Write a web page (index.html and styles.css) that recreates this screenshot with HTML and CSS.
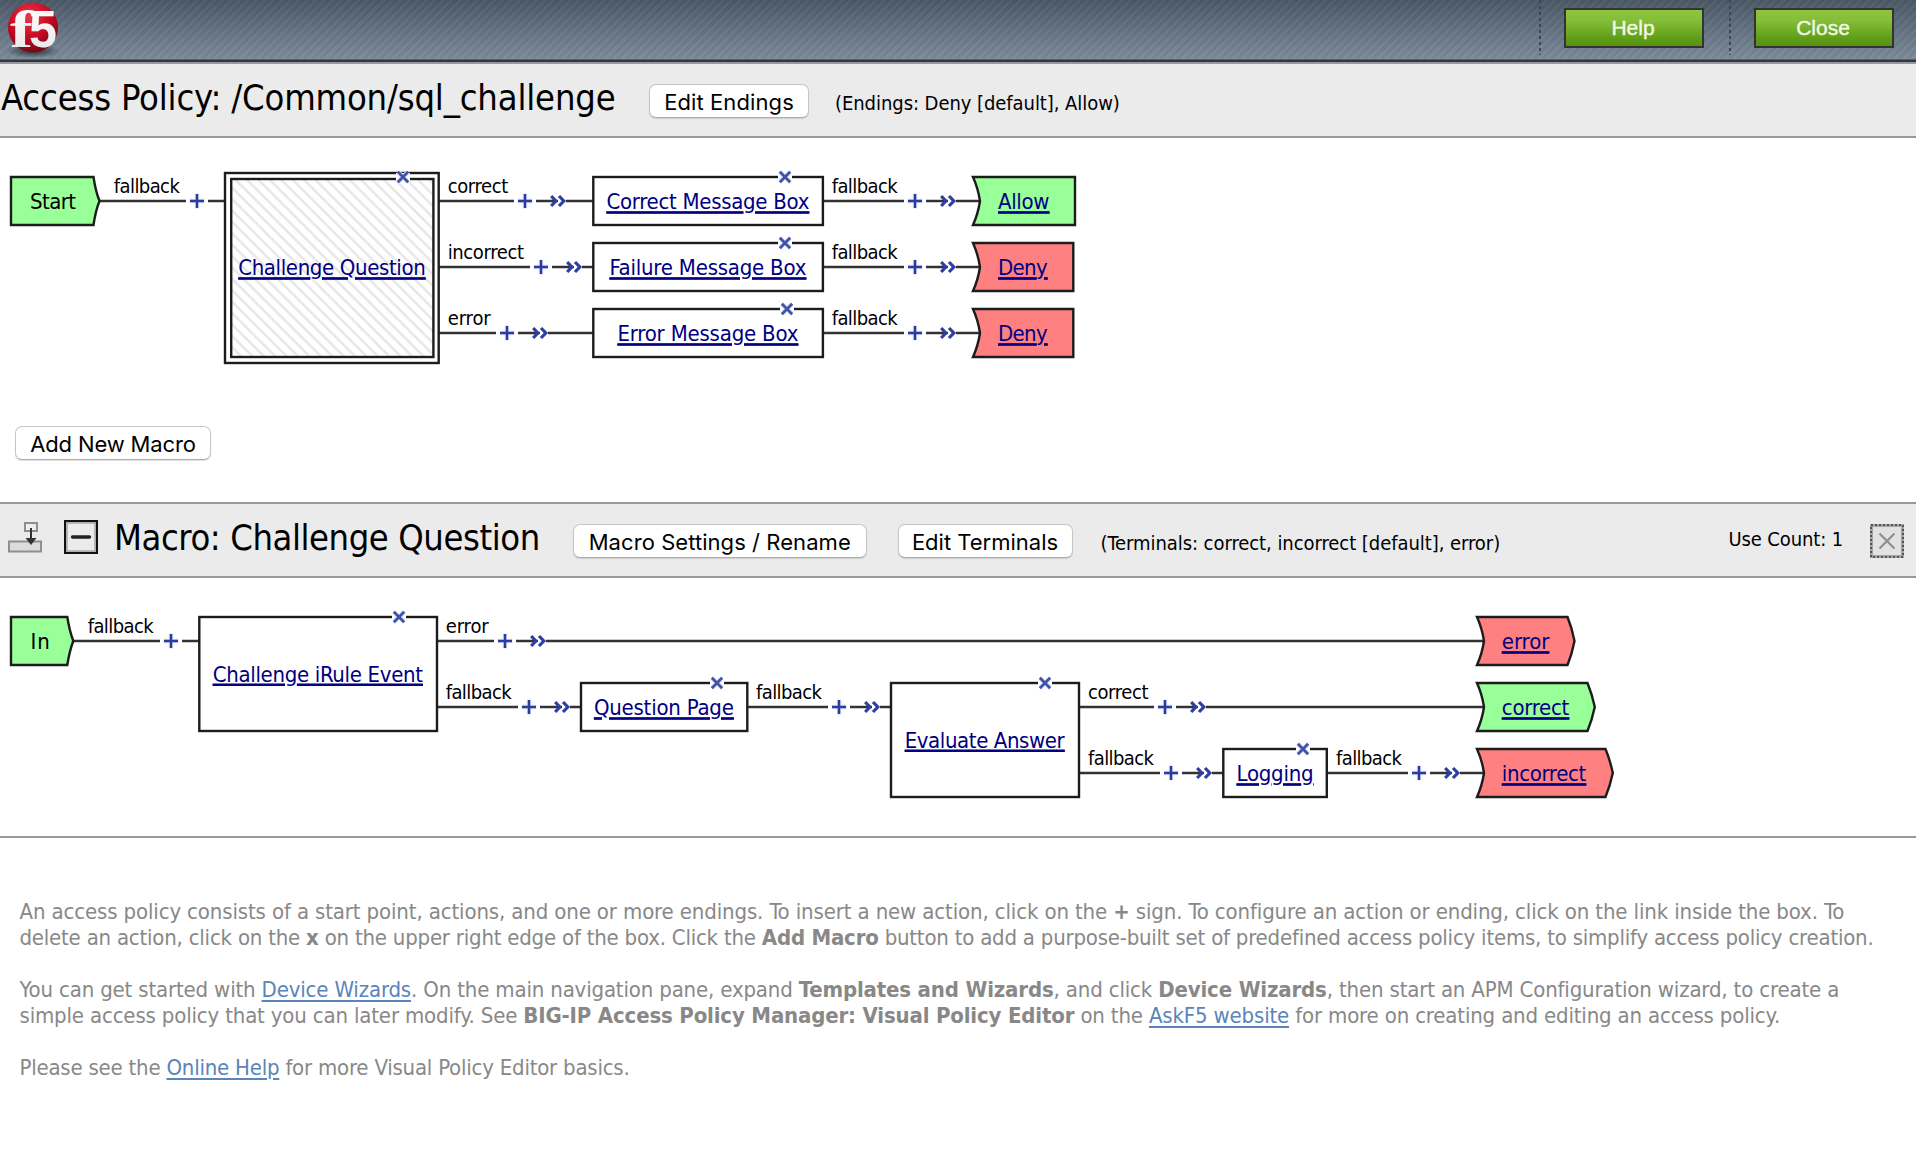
FILE: index.html
```html
<!DOCTYPE html>
<html lang="en">
<head>
<meta charset="utf-8">
<title>Visual Policy Editor</title>
<link rel="stylesheet" href="styles.css">
</head>
<body>
<svg class="defs" width="0" height="0" aria-hidden="true">
  <defs>
    <symbol id="plus" viewBox="-10 -10 20 20" overflow="visible">
      <path class="halo" d="M-7.5 0H7.5M0 -7.5V7.5"/><path class="plus" d="M-7 0H7M0 -7V7"/>
    </symbol>
    <symbol id="chev" viewBox="-10 -10 20 20" overflow="visible">
      <rect x="0" y="-2" width="8" height="4" fill="#fff"/>
      <path class="chev" d="M-6.8 -5L-2.2 0L-6.8 5M1 -5L5.8 0L1 5"/>
    </symbol>
    <symbol id="del" viewBox="-10 -10 20 20" overflow="visible">
      <rect x="-7" y="-4" width="14" height="8" fill="#fff"/>
      <path class="halo" d="M-5.2 -5.2L5.2 5.2M5.2 -5.2L-5.2 5.2"/><path class="del" d="M-5.200 -5.200L5.200 5.200M5.200 -5.200L-5.200 5.200"/>
    </symbol>
    <pattern id="hatch" width="11.4" height="11.4" patternUnits="userSpaceOnUse">
      <path d="M-2 -2L13.4 13.4M-2 9.4L2 13.4M9.4 -2L13.4 2" stroke="#e6e6e6" stroke-width="2.4"/>
    </pattern>
    <radialGradient id="ball" cx="0.42" cy="0.28" r="0.75">
      <stop offset="0" stop-color="#e8384a"/><stop offset="0.55" stop-color="#c90a24"/><stop offset="1" stop-color="#6e0812"/>
    </radialGradient>
    <radialGradient id="shade"><stop offset="0" stop-color="#1d242c" stop-opacity="0.9"/><stop offset="1" stop-color="#1d242c" stop-opacity="0"/></radialGradient>
    <linearGradient id="glyph" x1="0" y1="0" x2="0" y2="1"><stop offset="0" stop-color="#fff"/><stop offset="1" stop-color="#e6e6e6"/></linearGradient>
  </defs>
</svg>

<header class="topbar">
  <svg class="logo" width="68" height="60" viewBox="0 0 68 60">
    <ellipse cx="33" cy="51" rx="27" ry="7" fill="url(#shade)"/>
    <circle cx="33" cy="27.5" r="25" fill="url(#ball)"/>
    <text class="logo-f" x="10" y="47" textLength="23" lengthAdjust="spacingAndGlyphs">f</text>
    <text class="logo-5" x="29" y="47" textLength="28" lengthAdjust="spacingAndGlyphs">5</text>
  </svg>
  <nav class="actions">
    <div class="action"><button class="green">Help</button></div>
    <div class="action"><button class="green">Close</button></div>
  </nav>
</header>

<section class="bar">
  <h1 class="title policy-title">Access Policy: /Common/sql_challenge</h1>
  <button class="btn edit-endings">Edit Endings</button>
  <span class="note endings">(Endings: Deny [default], Allow)</span>
</section>

<main>
<section class="policy">
  <svg class="flow" width="1916" height="288" viewBox="0 0 1916 288">
    <g class="wire">
      <path d="M100 63H186M208 63H225"/>
      <path d="M439 63H514M536 63H593M439 129H530M552 129H593M439 195H496M518 195H593"/>
      <path d="M824 63H904M926 63H982M824 129H904M926 129H982M824 195H904M926 195H982"/>
    </g>
    <path class="node ok" d="M11 39H93.5Q95.5 53 99.5 63Q95.5 73 93.5 87H11Z"/>
    <text class="t" x="30" y="71.4" textLength="46">Start</text>
    <text class="l" x="113.8" y="55.4" textLength="66">fallback</text>
    <use href="#plus" x="187" y="53" width="20" height="20"/>

    <rect class="node" x="225" y="35" width="213.7" height="190"/>
    <rect class="node" x="231.2" y="41" width="202.2" height="178" style="fill:url(#hatch)"/>
    <use href="#del" x="393" y="29" width="20" height="20"/>
    <a><text class="t" x="238.2" y="137.4" textLength="187.5">Challenge Question</text></a>

    <text class="l" x="447.700" y="55.4" textLength="60.5">correct</text>
    <use href="#plus" x="515" y="53" width="20" height="20"/><use href="#chev" x="548" y="53" width="20" height="20"/>
    <text class="l" x="447.700" y="121.4" textLength="76.3">incorrect</text>
    <use href="#plus" x="531" y="119" width="20" height="20"/><use href="#chev" x="564" y="119" width="20" height="20"/>
    <text class="l" x="447.700" y="187.4" textLength="43">error</text>
    <use href="#plus" x="497" y="185" width="20" height="20"/><use href="#chev" x="530" y="185" width="20" height="20"/>

    <rect class="node" x="593.3" y="39" width="229.6" height="48"/>
    <rect class="node" x="593.3" y="105" width="229.6" height="48"/>
    <rect class="node" x="593.3" y="171" width="229.6" height="48"/>
    <use href="#del" x="775" y="29" width="20" height="20"/><use href="#del" x="775" y="95" width="20" height="20"/><use href="#del" x="777" y="161" width="20" height="20"/>
    <a><text class="t" x="606.4" y="71.4" textLength="203">Correct Message Box</text></a>
    <a><text class="t" x="609.4" y="137.4" textLength="197">Failure Message Box</text></a>
    <a><text class="t" x="617.4" y="203.4" textLength="181">Error Message Box</text></a>

    <text class="l" x="831.700" y="55.4" textLength="66">fallback</text>
    <use href="#plus" x="905" y="53" width="20" height="20"/><use href="#chev" x="938" y="53" width="20" height="20"/>
    <text class="l" x="831.700" y="121.4" textLength="66">fallback</text>
    <use href="#plus" x="905" y="119" width="20" height="20"/><use href="#chev" x="938" y="119" width="20" height="20"/>
    <text class="l" x="831.700" y="187.4" textLength="66">fallback</text>
    <use href="#plus" x="905" y="185" width="20" height="20"/><use href="#chev" x="938" y="185" width="20" height="20"/>

    <path class="node ok" d="M973 39H1075V87H973Q978 76 980 63Q978 50 973 39Z"/>
    <path class="node bad" d="M973 105H1073.3V153H973Q978 142 980 129Q978 116 973 105Z"/>
    <path class="node bad" d="M973 171H1073.3V219H973Q978 208 980 195Q978 182 973 171Z"/>
    <a><text class="t" x="998" y="71.4" textLength="51.5">Allow</text></a>
    <a><text class="t" x="998" y="137.4" textLength="49.7">Deny</text></a>
    <a><text class="t" x="998" y="203.4" textLength="49.7">Deny</text></a>
  </svg>
  <button class="btn add-macro">Add New Macro</button>
</section>

<section class="bar macro-bar">
  <svg class="insert" width="34" height="32" viewBox="0 0 34 32">
    <rect x="1" y="19.5" width="32" height="10" fill="#dcdcdc" stroke="#8e8e8e" stroke-width="2"/>
    <rect x="17" y="1" width="12" height="8" fill="#eee" stroke="#8e8e8e" stroke-width="2"/>
    <path d="M23 6V18" stroke="#333" stroke-width="2"/><path d="M17.5 16H28.5L23 23Z" fill="#333"/>
  </svg>
  <svg class="collapse" width="34" height="34" viewBox="0 0 34 34">
    <rect x="1" y="1" width="32" height="32" fill="#ebebeb" stroke="#111" stroke-width="2.4"/>
    <rect x="3" y="3" width="28" height="28" fill="none" stroke="#aaa" stroke-width="1.5"/>
    <path d="M8.500 17H25.500" stroke="#222" stroke-width="3.400" stroke-linecap="round"/>
  </svg>
  <h2 class="title macro-title">Macro: Challenge Question</h2>
  <button class="btn rename">Macro Settings / Rename</button>
  <button class="btn edit-terminals">Edit Terminals</button>
  <span class="note terminals">(Terminals: correct, incorrect [default], error)</span>
  <span class="note count">Use Count: 1</span>
  <svg class="remove" width="34" height="34" viewBox="0 0 34 34">
    <rect x="1.500" y="1.500" width="31" height="31" fill="#e2e2e2" stroke="#a4a4a4" stroke-width="3"/>
    <rect x="1" y="1" width="32" height="32" fill="none" stroke="#555" stroke-width="2" stroke-dasharray="2 2"/>
    <path d="M9.500 9.500L24.500 24.500M24.500 9.500L9.500 24.500" stroke="#8f8f8f" stroke-width="2.200"/>
  </svg>
</section>

<section class="macro">
  <svg class="flow" width="1916" height="258" viewBox="0 0 1916 258">
    <g class="wire">
      <path d="M74 63H160M182 63H199M438 63H494M516 63H1487"/>
      <path d="M438 129H518M540 129H581M748 129H828M850 129H891M1080 129H1154M1176 129H1487"/>
      <path d="M1080 195H1160M1182 195H1223M1328 195H1408M1430 195H1487"/>
    </g>
    <path class="node ok" d="M11 39H67.3Q69.5 53 73.3 63Q69.5 73 67.3 87H11Z"/>
    <text class="t" x="30.4" y="71.4" textLength="19.5">In</text>
    <text class="l" x="87.700" y="55.4" textLength="66">fallback</text>
    <use href="#plus" x="161" y="53" width="20" height="20"/>

    <rect class="node" x="199.3" y="39" width="237.7" height="114"/>
    <use href="#del" x="389" y="29" width="20" height="20"/>
    <a><text class="t" x="212.700" y="103.700" textLength="210.3">Challenge iRule Event</text></a>
    <text class="l" x="445.700" y="55.4" textLength="43">error</text>
    <use href="#plus" x="495" y="53" width="20" height="20"/><use href="#chev" x="528" y="53" width="20" height="20"/>
    <text class="l" x="445.700" y="121.4" textLength="66">fallback</text>
    <use href="#plus" x="519" y="119" width="20" height="20"/><use href="#chev" x="552" y="119" width="20" height="20"/>

    <rect class="node" x="581" y="105" width="166.3" height="48"/>
    <use href="#del" x="707" y="95" width="20" height="20"/>
    <a><text class="t" x="593.9" y="137.4" textLength="140">Question Page</text></a>
    <text class="l" x="756" y="121.4" textLength="66">fallback</text>
    <use href="#plus" x="829" y="119" width="20" height="20"/><use href="#chev" x="862" y="119" width="20" height="20"/>

    <rect class="node" x="891" y="105" width="188" height="114"/>
    <use href="#del" x="1035" y="95" width="20" height="20"/>
    <a><text class="t" x="904.700" y="169.700" textLength="160">Evaluate Answer</text></a>
    <text class="l" x="1088" y="121.4" textLength="60.5">correct</text>
    <use href="#plus" x="1155" y="119" width="20" height="20"/><use href="#chev" x="1188" y="119" width="20" height="20"/>
    <text class="l" x="1088" y="187.4" textLength="66">fallback</text>
    <use href="#plus" x="1161" y="185" width="20" height="20"/><use href="#chev" x="1194" y="185" width="20" height="20"/>

    <rect class="node" x="1223.3" y="171" width="103.5" height="48"/>
    <use href="#del" x="1293" y="161" width="20" height="20"/>
    <a><text class="t" x="1236.5" y="203.4" textLength="77">Logging</text></a>
    <text class="l" x="1336" y="187.4" textLength="66">fallback</text>
    <use href="#plus" x="1409" y="185" width="20" height="20"/><use href="#chev" x="1442" y="185" width="20" height="20"/>

    <path class="node bad" d="M1477 39H1567.5Q1572 50 1574.500 63Q1572 76 1567.5 87H1477Q1482 76 1484 63Q1482 50 1477 39Z"/>
    <path class="node ok" d="M1477 105H1587.5Q1592 116 1594.800 129Q1592 142 1587.5 153H1477Q1482 142 1484 129Q1482 116 1477 105Z"/>
    <path class="node bad" d="M1477 171H1605.5Q1610 182 1612.800 195Q1610 208 1605.5 219H1477Q1482 208 1484 195Q1482 182 1477 171Z"/>
    <a><text class="t" x="1501.8" y="71.4" textLength="47.5">error</text></a>
    <a><text class="t" x="1501.8" y="137.4" textLength="67.5">correct</text></a>
    <a><text class="t" x="1501.8" y="203.4" textLength="84.5">incorrect</text></a>
  </svg>
</section>

<section class="help">
  <p>
    <span class="line l1">An access policy consists of a start point, actions, and one or more endings. To insert a new action, click on the <b>+</b> sign. To configure an action or ending, click on the link inside the box. To</span>
    <span class="line l2">delete an action, click on the <b>x</b> on the upper right edge of the box. Click the <b>Add Macro</b> button to add a purpose-built set of predefined access policy items, to simplify access policy creation.</span>
  </p>
  <p>
    <span class="line l3">You can get started with <a href="#">Device Wizards</a>. On the main navigation pane, expand <b>Templates and Wizards</b>, and click <b>Device Wizards</b>, then start an APM Configuration wizard, to create a</span>
    <span class="line l4">simple access policy that you can later modify. See <b>BIG-IP Access Policy Manager: Visual Policy Editor</b> on the <a href="#">AskF5 website</a> for more on creating and editing an access policy.</span>
  </p>
  <p><span class="line l5">Please see the <a href="#">Online Help</a> for more Visual Policy Editor basics.</span></p>
</section>
</main>
</body>
</html>
```
FILE: styles.css
```css
* { box-sizing: border-box; }
body {
  margin: 0;
  background: #fff;
  color: #000;
  font-family: "DejaVu Sans Condensed", "DejaVu Sans", sans-serif;
  overflow-x: hidden;
}
svg { display: block; flex: none; }
.defs { position: absolute; }

.topbar {
  display: flex;
  justify-content: space-between;
  height: 64px;
  border-bottom: 2px solid #999;
  background:
    linear-gradient(transparent 59px, #56636f 59px, #56636f 60px, #2b3746 60px, #2b3746 62px),
    repeating-linear-gradient(135deg, rgba(255,255,255,.035) 0 3px, rgba(0,0,0,.025) 3px 6px),
    linear-gradient(#4a5764, #647282 50%, #7c8a96 59px);
}
.logo-f, .logo-5 { font-weight: bold; fill: url(#glyph); }
.logo-f { font-family: "Liberation Serif", serif; font-size: 53px; }
.logo-5 { font-family: "Liberation Sans", sans-serif; font-size: 52px; }
.actions { display: flex; padding-right: 22px; gap: 25px; }
.action {
  height: 55px;
  padding: 8px 0 0 25px;
  background: repeating-linear-gradient(#3a4654 0 3px, transparent 3px 6px) 0 0 / 2px 100% no-repeat;
}
.green {
  display: block;
  width: 140px;
  height: 40px;
  padding: 0 2px 0 0;
  border: 2px solid #333;
  background: linear-gradient(#8cc63f, #84bd38 30%, #5c9a14 85%, #56920e);
  color: #f1f8e4;
  font: 21px "Liberation Sans", sans-serif;
  -webkit-text-stroke: .4px #f1f8e4;
}

.bar {
  display: flex;
  align-items: baseline;
  height: 74px;
  padding-top: 12px;
  background: #ebebeb;
  border-bottom: 2px solid #999;
}
.title { margin: 0; font-size: 36px; font-weight: normal; line-height: 44px; white-space: nowrap; }
.policy-title { width: 647px; padding-left: 1px; letter-spacing: -.16px; }
.macro-title { width: 459px; padding-left: 0; letter-spacing: -.42px; }
.btn {
  height: 34px;
  padding: 2px 0 0;
  border: 1px solid #c6c6c6;
  border-bottom-color: #acacac;
  border-radius: 7px;
  background: #fff;
  box-shadow: 0 1px 1px rgba(0,0,0,.12);
  color: #000;
  font: 22px Inter, sans-serif;
  white-space: nowrap;
  flex: none;
}
.edit-endings { width: 160px; margin-left: 2px; letter-spacing: .1px; }
.rename { width: 293.5px; letter-spacing: .06px; }
.edit-terminals { width: 175px; margin-left: 31px; }
.add-macro { display: block; width: 196px; margin-left: 15px; letter-spacing: -.15px; }
.note { font-size: 20px; white-space: nowrap; letter-spacing: -.06px; }
.endings { margin-left: 26px; }
.terminals { margin-left: 28px; }
.count { align-self: flex-start; margin: 11px 27px 0 auto; letter-spacing: -.12px; }

.policy { height: 364px; }
.macro-bar { height: 76px; border-top: 2px solid #999; }
.insert { align-self: flex-start; margin: 6px 22px 0 8px; }
.collapse { align-self: flex-start; margin: 4px 16px 0 0; }
.remove { align-self: flex-start; margin: 8px 12px 0 0; }
.macro { border-bottom: 2px solid #999; }

.wire { stroke: #333; stroke-width: 2.6; fill: none; }
.node { fill: #fff; stroke: #1c1c1c; stroke-width: 2.4; }
.ok { fill: #99ff99; }
.bad { fill: #ff8080; }
.halo { stroke: #dde3f6; stroke-width: 4.5; fill: none; }
.plus { stroke: #2c3c9c; stroke-width: 2.5; }
.chev { stroke: #2f3ea2; stroke-width: 3.2; fill: none; }
.del { stroke: #4151a8; stroke-width: 2.7; }
.t { font-size: 22px; }
.l { font-size: 20px; }
.flow a, .flow a .t { fill: #000080; text-decoration: underline; text-decoration-thickness: 2px; text-underline-offset: 3px; }

.help { padding: 61px 20px 0 19.5px; color: #888; font-size: 22px; line-height: 26px; }
.help p { margin: 0 0 26px; }
.help a { color: #5b84b8; text-decoration-thickness: 2px; text-underline-offset: 3px; }
.line { display: block; white-space: nowrap; }
.l1 { letter-spacing: -.134px; }
.l2 { letter-spacing: -.218px; }
.l3 { letter-spacing: -.162px; }
.l4 { letter-spacing: -.166px; }
.l5 { letter-spacing: -.22px; }
```
